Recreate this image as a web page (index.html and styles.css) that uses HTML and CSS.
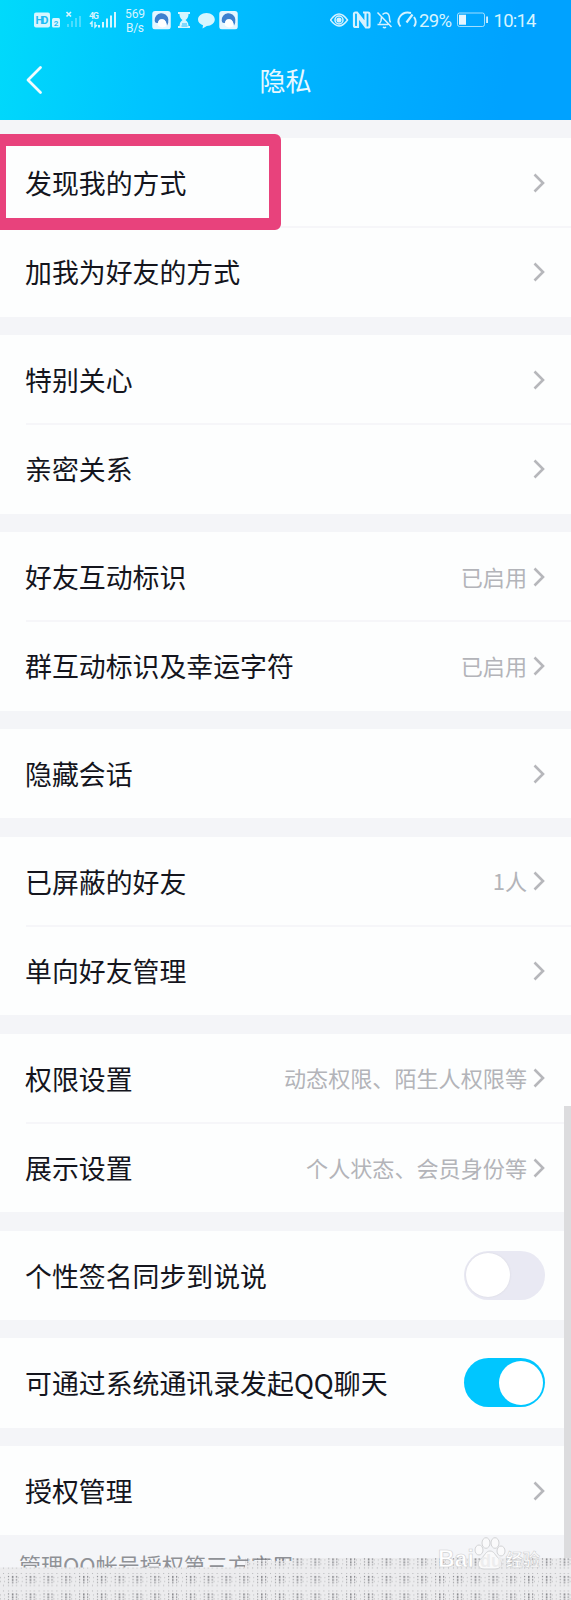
FILE: index.html
```html
<!DOCTYPE html>
<html lang="zh-CN">
<head>
    <meta charset="UTF-8">
    <meta name="viewport" content="width=device-width, initial-scale=1.0">
    <title>隐私</title>
    <link rel="stylesheet" href="styles.css">
</head>
<body>
    <!-- shared shapes -->
    <svg class="defs" width="0" height="0">
        <symbol id="chevron" viewBox="0 0 12 20">
            <path d="M1.5 1.5L10 10L1.5 18.5" fill="none" stroke="#b6b7bb" stroke-width="2.600"/>
        </symbol>
        <symbol id="app" viewBox="0 0 19 19">
            <rect width="19" height="19" rx="3" fill="#e4f6ff"/>
            <path d="M2.500 10A7 7 0 0 1 16.500 8.500Q17 12 15 15.500Q14.500 9 10.500 8.500Q6.500 8 6 12Q3 13 2.500 10Z" fill="#3d80cf"/>
            <path d="M6 12Q6.500 8 10.500 8.500Q14.500 9 15 15.500Q9 19 5.500 14.500Z" fill="#fff"/>
        </symbol>
    </svg>

    <header class="header">
        <div class="status">
            <svg width="240" height="40" viewBox="0 0 240 40">
                <g fill="#d6f6ff">
                    <rect x="34" y="12.500" width="16" height="15" rx="2"/>
                    <rect x="52" y="18" width="8" height="9.500" rx="1.500"/>
                    <path d="M67 26v-3h2v3zM71 26v-6h2v6zM75 26v-9h2v9zM79 26v-11h2v11z" transform="translate(0 1)" opacity=".35"/>
                    <path d="M98 27.500v-2.500h2v2.500zM102 27.500v-5.500h2v5.500zM106 27.500v-9h2v9zM110 27.500v-12h2v12zM114 27.500v-15.500h2v15.500z"/>
                    <path d="M179 12h11v2h-1.500q0 4-3 6q3 2 3 6h1.500v2h-12v-2h1.500q0-4 3-6q-3-2-3-6h-1.500v-2z"/>
                    <path d="M206.500 13c5 0 8.300 3 8.300 6.500s-3.500 6.500-8 6.500l-4.300 2.500l.5-3.200c-3-1-5-3-5-5.800c0-3.500 3.500-6.500 8.500-6.500z"/>
                </g>
                <path d="M66.500 12l4.500 4.500M71 12l-4.500 4.500" stroke="#d6f6ff" stroke-width="1.700"/>
                <path d="M182 24h5M181.500 26h6" stroke="#27bdfd" stroke-width="1"/>
                <path d="M92 27v-5l-2 2M95 22v5l2-2" fill="none" stroke="#d6f6ff" stroke-width="1.400"/>
                <text class="hd" x="35.500" y="24.200" textLength="13">HD</text>
                <text class="hd sim" x="53.800" y="25.500">2</text>
                <text class="net" x="89" y="18.500" textLength="10">4G</text>
                <text class="speed" x="125" y="18" textLength="20">569</text>
                <text class="speed" x="126" y="32" textLength="18">B/s</text>
                <use href="#app" x="152" y="11" width="19" height="18.500"/>
                <use href="#app" x="219" y="11" width="19" height="18.500"/>
            </svg>
            <svg width="241" height="40" viewBox="330 0 241 40">
                <g fill="none" stroke="#d6f2ff" stroke-width="1.500">
                    <path d="M330.500 20Q339 8 347.500 20Q339 32 330.500 20Z"/>
                    <circle cx="339" cy="20" r="4"/>
                    <circle cx="339" cy="20" r="1.800" fill="#d6f2ff"/>
                    <path d="M359 27h-3.500q-1.500 0-1.500-1.500v-11.500q0-1.500 1.500-1.500h1.500l8.500 11v-11M363 12.500h5q1.500 0 1.500 1.500v12q0 1.500-1.500 1.500h-2l-8-11v11" stroke-width="2.200"/>
                    <path d="M377.500 12.500l14 14.500M379.500 23.500q2-2 2-6.500M377.500 24.500h10.500M382.500 14.500q2-2 4-1.500q3 1 3 5.500q0 2 1 4M383 27q1.500 1.500 3 0"/>
                    <path d="M400.500 26.500q-4-5-.5-10q4-5.500 11-3.500M414 17q3.500 5 0 9.500" stroke-width="1.900"/>
                    <path d="M406.500 22.500l6-8" stroke-width="2.200"/>
                    <rect x="457.500" y="13" width="27" height="13.500" rx="2" stroke-width="1" opacity=".75"/>
                </g>
                <path d="M459 14.800h7v10h-7zM486.200 16.500h1.700v6.500h-1.700z" fill="#e4f6ff"/>
                <text class="clock" x="419" y="26.800" textLength="33">29%</text>
                <text class="clock" x="493.500" y="26.800" textLength="43">10:14</text>
            </svg>
        </div>
        <div class="navbar">
            <svg class="back" width="18" height="30" viewBox="0 0 18 30">
                <path d="M15.500 2.500L3 15L15.500 27.500" fill="none" stroke="#f0fcff" stroke-width="2.800" stroke-linecap="round" stroke-linejoin="round"/>
            </svg>
            <h1>隐私</h1>
        </div>
    </header>

    <main class="settings">
        <section class="group">
            <div class="row marked"><span class="label">发现我的方式</span><svg class="chevron"><use href="#chevron"/></svg></div>
            <div class="row"><span class="label">加我为好友的方式</span><svg class="chevron"><use href="#chevron"/></svg></div>
        </section>
        <section class="group">
            <div class="row"><span class="label">特别关心</span><svg class="chevron"><use href="#chevron"/></svg></div>
            <div class="row"><span class="label">亲密关系</span><svg class="chevron"><use href="#chevron"/></svg></div>
        </section>
        <section class="group">
            <div class="row"><span class="label">好友互动标识</span><span class="value">已启用</span><svg class="chevron"><use href="#chevron"/></svg></div>
            <div class="row"><span class="label">群互动标识及幸运字符</span><span class="value">已启用</span><svg class="chevron"><use href="#chevron"/></svg></div>
        </section>
        <section class="group">
            <div class="row"><span class="label">隐藏会话</span><svg class="chevron"><use href="#chevron"/></svg></div>
        </section>
        <section class="group">
            <div class="row"><span class="label">已屏蔽的好友</span><span class="value">1人</span><svg class="chevron"><use href="#chevron"/></svg></div>
            <div class="row"><span class="label">单向好友管理</span><svg class="chevron"><use href="#chevron"/></svg></div>
        </section>
        <section class="group">
            <div class="row"><span class="label">权限设置</span><span class="value">动态权限、陌生人权限等</span><svg class="chevron"><use href="#chevron"/></svg></div>
            <div class="row"><span class="label">展示设置</span><span class="value">个人状态、会员身份等</span><svg class="chevron"><use href="#chevron"/></svg></div>
        </section>
        <section class="group">
            <div class="row"><span class="label">个性签名同步到说说</span><span class="switch"></span></div>
        </section>
        <section class="group">
            <div class="row"><span class="label">可通过系统通讯录发起QQ聊天</span><span class="switch on"></span></div>
        </section>
        <section class="group">
            <div class="row"><span class="label">授权管理</span><svg class="chevron"><use href="#chevron"/></svg></div>
        </section>
    </main>

    <footer class="footer">
        <p>管理QQ帐号授权第三方应用</p>
        <svg class="dots" width="571" height="42" viewBox="0 0 571 42">
            <defs>
                <pattern id="grain" width="17.800" height="17.500" patternUnits="userSpaceOnUse" y="-3.500">
                    <g fill="#b4b5b8">
                        <path d="M3 1h1v1h-1zM8 1h1v1h-1zM12 1h1v1h-1zM16 1h1v1h-1z"/>
                        <path d="M0 5h1v1h-1zM4 5h1v1h-1zM0 9h1v1h-1zM4 9h1v1h-1zM3 13h1v1h-1zM8 13h1v1h-1zM12 13h1v1h-1zM16 13h1v1h-1z"/>
                    </g>
                    <g fill="#74757a">
                        <path d="M8 4h1v1h-1zM8 7h1v1h-1zM8 10h1v1h-1zM12 4h1.300v2h-1.300zM12 7h1.300v2h-1.300zM12 10h1.300v1.300h-1.300zM16 4h1v1.500h-1zM16 7h1v1.500h-1zM16 10h1v1h-1z"/>
                    </g>
                </pattern>
            </defs>
            <path d="M0 9.500H245V3H292V0H571V42H0Z" fill="#ececee"/>
            <path d="M0 9.500H245V0H571V42H0Z" fill="url(#grain)"/>
        </svg>
        <div class="watermark">
            <span>Bai</span>
            <svg width="32" height="34" viewBox="0 0 32 34">
                <g fill="#fafafb" stroke="#d2d3d5" stroke-width="1">
                    <ellipse cx="5" cy="13" rx="4" ry="5"/>
                    <ellipse cx="12" cy="6" rx="4" ry="5.300"/>
                    <ellipse cx="21" cy="6" rx="4" ry="5.300"/>
                    <ellipse cx="27" cy="14" rx="4" ry="5"/>
                    <path d="M16 14c4 0 5 4 9 8c5 5 2 10-4 10h-11c-6 0-8-6-3-10c4-4 5-8 9-8z"/>
                </g>
                <text x="6" y="29.500">du</text>
            </svg>
            <span class="jy">经验</span>
        </div>
    </footer>
    <div class="scrollbar"></div>
</body>
</html>
```
FILE: styles.css
```css
*, *::before, *::after {
    box-sizing: border-box;
}
body {
    position: relative;
    margin: 0;
    width: 571px;
    height: 1600px;
    overflow: hidden;
    background-color: #f4f5f8;
    font-family: "Noto Sans CJK SC", sans-serif;
    color: #14151d;
}
.defs {
    position: absolute;
}
.header {
    height: 119.5px;
    background: linear-gradient(100deg, #00dafb 0%, #00c4ff 27%, #00b0ff 60%, #00a2ff 88%, #00a2ff 100%);
}
.status {
    display: flex;
    justify-content: space-between;
    height: 40px;
}
.status text {
    font-family: Roboto, sans-serif;
    fill: #d6f4ff;
}
.status .hd {
    font-size: 11px;
    font-weight: 700;
    fill: #1bbcf5;
}
.status .sim {
    font-size: 8px;
}
.status .net {
    font-size: 9px;
    font-weight: 700;
}
.status .speed {
    font-size: 12px;
}
.status .clock {
    font-size: 18.5px;
}
.navbar {
    display: grid;
    grid-template-columns: 26px 1fr 26px;
    align-items: center;
    height: 79px;
}
.back {
    margin-left: 25px;
}
h1 {
    margin: 1px 0 0;
    font-size: 26px;
    font-weight: 400;
    line-height: 38px;
    text-align: center;
    color: #e8f8ff;
}

/* settings list */
.settings {
    display: flex;
    flex-direction: column;
    gap: 18.4px;
    padding-top: 18.5px;
}
.group {
    background-color: #fdfefe;
}
.row {
    position: relative;
    display: flex;
    align-items: center;
    height: 89.3px;
    padding: 0 26px 0 25px;
}
.row + .row::before {
    content: "";
    position: absolute;
    top: -1px;
    left: 26px;
    right: 0;
    height: 2px;
    background-color: #f6f6f9;
}
.label {
    flex: 1;
    padding-top: 1px;
    font-size: 26.9px;
    line-height: 40px;
}
.value {
    margin: -2px 6px 0 0;
    font-size: 22.1px;
    font-weight: 400;
    line-height: 32px;
    color: #b3b4b9;
}
.chevron {
    width: 12px;
    height: 20px;
}
.marked::after {
    content: "";
    position: absolute;
    z-index: 1;
    top: -4px;
    left: -6px;
    width: 287px;
    height: 96px;
    border: 12px solid #e8427c;
    border-radius: 6px;
}
.switch {
    display: flex;
    align-items: center;
    width: 81px;
    height: 49px;
    padding: 0 2px;
    border-radius: 25px;
    background-color: #e9e9f3;
}
.switch::before {
    content: "";
    width: 44px;
    height: 44px;
    border-radius: 50%;
    background-color: #fff;
    box-shadow: 0 0 2px #d5d5dd;
}
.switch.on {
    justify-content: flex-end;
    background-color: #00c6ff;
}
.switch.on::before {
    box-shadow: none;
}

.footer {
    position: relative;
    height: 65px;
    overflow: hidden;
}
.footer p {
    margin: 0;
    padding: 13px 0 0 19px;
    font-size: 22px;
    font-weight: 400;
    line-height: 32px;
    color: #8f9196;
}
.dots {
    position: absolute;
    left: 0;
    top: 23px;
}
.watermark {
    position: absolute;
    left: 438px;
    top: 2px;
    display: flex;
    align-items: flex-end;
    height: 34px;
    font: 700 23px/24px "Liberation Sans", sans-serif;
    color: #fff;
    -webkit-text-stroke: 0.6px #cfd0d2;
}
.watermark svg text {
    font-size: 18px;
    fill: #ededee;
}
.watermark .jy {
    font-family: "Noto Sans CJK SC", sans-serif;
    font-size: 17px;
}
.scrollbar {
    position: absolute;
    top: 1106px;
    right: 0;
    width: 7px;
    height: 452px;
    background-color: #dcdcde;
}
```
